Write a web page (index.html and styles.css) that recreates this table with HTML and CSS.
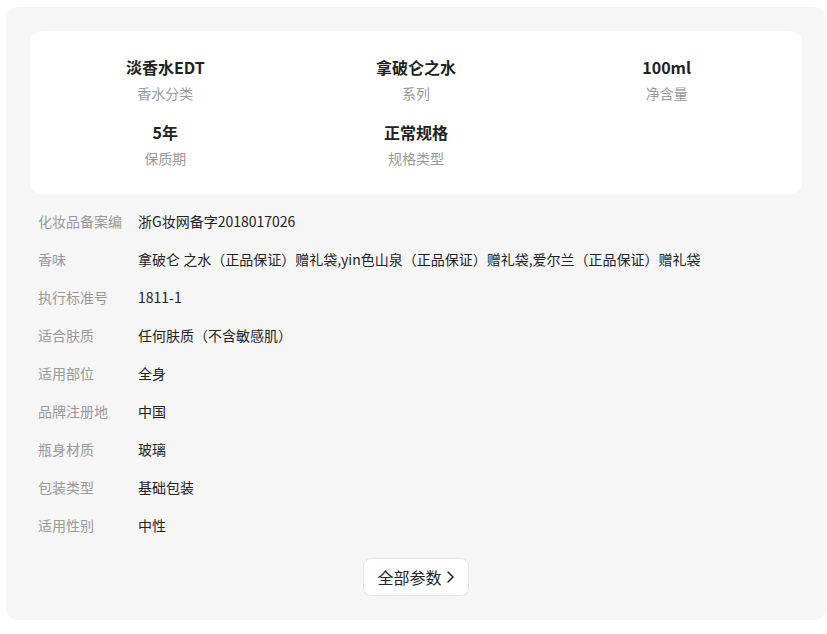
FILE: index.html
```html
<!DOCTYPE html>
<html lang="zh-CN">
<head>
<meta charset="utf-8">
<title>商品参数</title>
<link rel="stylesheet" href="styles.css">
</head>
<body>
<section class="panel">
  <div class="card">
    <div class="card-item"><div class="card-value">淡香水EDT</div><div class="card-label">香水分类</div></div>
    <div class="card-item"><div class="card-value">拿破仑之水</div><div class="card-label">系列</div></div>
    <div class="card-item"><div class="card-value">100ml</div><div class="card-label">净含量</div></div>
    <div class="card-item"><div class="card-value">5年</div><div class="card-label">保质期</div></div>
    <div class="card-item"><div class="card-value">正常规格</div><div class="card-label">规格类型</div></div>
  </div>
  <dl class="params">
    <div class="row"><dt>化妆品备案编</dt><dd>浙G妆网备字2018017026</dd></div>
    <div class="row"><dt>香味</dt><dd>拿破仑 之水（正品保证）赠礼袋,yin色山泉（正品保证）赠礼袋,爱尔兰（正品保证）赠礼袋</dd></div>
    <div class="row"><dt>执行标准号</dt><dd>1811-1</dd></div>
    <div class="row"><dt>适合肤质</dt><dd>任何肤质（不含敏感肌）</dd></div>
    <div class="row"><dt>适用部位</dt><dd>全身</dd></div>
    <div class="row"><dt>品牌注册地</dt><dd>中国</dd></div>
    <div class="row"><dt>瓶身材质</dt><dd>玻璃</dd></div>
    <div class="row"><dt>包装类型</dt><dd>基础包装</dd></div>
    <div class="row"><dt>适用性别</dt><dd>中性</dd></div>
  </dl>
  <div class="more-wrap">
    <button class="more" type="button">全部参数<svg class="chev" width="9" height="14" viewBox="0 0 9 14"><polyline points="2,2 7,7 2,12" fill="none" stroke="#222" stroke-width="1.5" stroke-linecap="round" stroke-linejoin="round"/></svg></button>
  </div>
</section>
</body>
</html>
```
FILE: styles.css
```css
* { box-sizing: border-box; }
html, body { margin: 0; background: #fff; }
body {
  padding: 7px 1px 13px 6px;
  font-family: "Noto Sans CJK SC", "Noto Sans", sans-serif;
  color: #222;
}
.panel {
  background: #f6f6f6;
  border-radius: 12px;
  padding: 24px;
}
.card {
  background: #fff;
  border-radius: 12px;
  padding: 24px 10px 26px;
  display: grid;
  grid-template-columns: repeat(3, 1fr);
  row-gap: 17px;
  text-align: center;
}
.card-value {
  font-size: 16px;
  font-weight: 700;
  line-height: 24px;
  color: #222;
}
.card-label {
  margin-top: 4px;
  font-size: 14px;
  line-height: 20px;
  color: #999;
}
.params {
  margin: 8px 0 0;
  padding: 0;
}
.row {
  display: flex;
  height: 38px;
  align-items: center;
  font-size: 14px;
  padding-left: 8px;
}
.row dt {
  width: 100px;
  flex: none;
  color: #999;
}
.row dd {
  margin: 0;
  color: #222;
}
.more-wrap {
  display: flex;
  justify-content: center;
  margin-top: 14px;
}
.more {
  height: 38px;
  padding: 0 13px;
  background: #fff;
  border: 1px solid #e6e6e6;
  border-radius: 8px;
  font-family: inherit;
  font-size: 16px;
  color: #222;
  display: flex;
  align-items: center;
  gap: 4px;
  cursor: pointer;
}
.chev { display: block; }
```
